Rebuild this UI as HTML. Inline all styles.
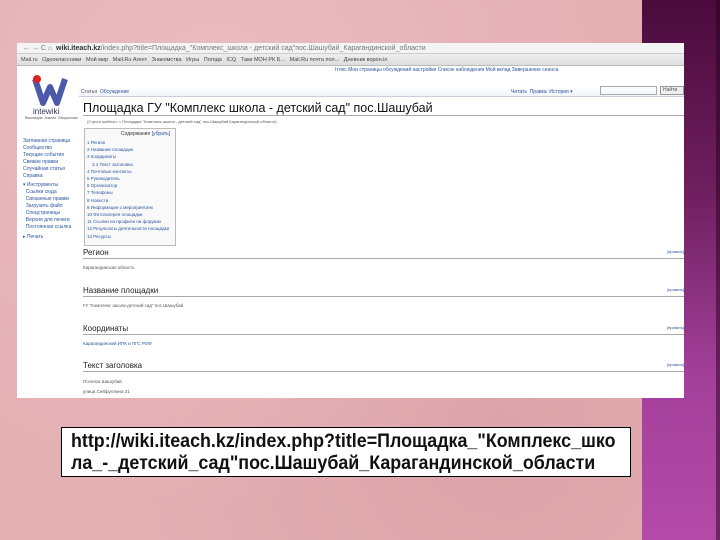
<!DOCTYPE html><html><head><meta charset="utf-8"><style>
*{margin:0;padding:0;box-sizing:border-box}
body{width:720px;height:540px;overflow:hidden;position:relative;background:#e3aeb3;font-family:"Liberation Sans",sans-serif}
.bg{position:absolute;inset:0;background:radial-gradient(circle at 30% 20%,#eabcc0,transparent 60%),radial-gradient(circle at 70% 80%,#dca4aa,transparent 60%),#e3b0b4}
.pur{position:absolute;left:642px;top:0;width:78px;height:540px;background:linear-gradient(#4a0b3c,#6e1f5e 35%,#a3409a 70%,#b44aa8)}
.pur:after{content:"";position:absolute;right:0;top:0;width:4px;height:540px;background:rgba(40,0,30,.5)}
.shot{position:absolute;left:17px;top:43px;width:667px;height:355px;background:#fff;overflow:hidden;font-size:5px;color:#555}
.addr{position:absolute;left:0;top:0;width:667px;height:11px;background:#f4f4f4;border-bottom:1px solid #ccc;font-size:7px;line-height:11px;padding-left:6px;color:#777;white-space:nowrap}
.bm{position:absolute;left:0;top:11px;width:667px;height:12px;background:linear-gradient(#eee,#ddd);border-bottom:1px solid #bbb;font-size:5.5px;line-height:12px;padding-left:4px;color:#444;white-space:nowrap}
.a{position:absolute;white-space:nowrap}
.blue{color:#2a55a0}
.h{position:absolute;left:66px;width:601px;border-bottom:1px solid #aaa;font-size:8px;color:#222;padding-bottom:1px}
.box{position:absolute;left:61px;top:427px;width:570px;height:50px;background:#fff;border:1px solid #000}
.ln{position:absolute;left:9px;font-size:19px;font-weight:bold;color:#111;white-space:nowrap;transform-origin:0 0;transform:scaleX(.94)}
</style></head><body>
<div class="bg"></div><div class="pur"></div>
<div class="shot">
<div class="addr">← → C ⌂ &nbsp;<b style="color:#333">wiki.iteach.kz</b>/index.php?title=Площадка_"Комплекс_школа - детский сад"пос.Шашубай_Карагандинской_области</div>
<div class="bm">Mail.ru &nbsp; Одноклассники &nbsp; Мой мир &nbsp; Mail.Ru Агент &nbsp; Знакомства &nbsp; Игры &nbsp; Погода &nbsp; ICQ &nbsp; Таки МОН РК Б... &nbsp; Mail.Ru почта пол... &nbsp; Дневник ворон.in</div>
<div class="a" style="left:14px;top:30px;width:38px;height:34px">
<svg width="38" height="34"><path d="M4 6 L12 30 L19 14 L26 30 L34 6" fill="none" stroke="#4a5aa8" stroke-width="6" stroke-linejoin="round"/><circle cx="6" cy="6" r="4" fill="#d22"/></svg></div>
<div class="a" style="left:16px;top:64px;font-size:8px;color:#335">intewiki</div>
<div class="a" style="left:8px;top:73px;font-size:3.5px">Википедия. Знание. Лекционная</div>
<div class="a" style="left:318px;top:24px;font-size:5px"><span style="color:#2a55a0">Iтлес Мои страницы обсуждений настройки Список наблюдения Мой вклад Завершение сеанса</span></div>
<div class="a" style="left:62px;top:43px;width:605px;height:11px;border-bottom:1px solid #ccd;background:linear-gradient(#fff,#f2f5fa)"></div>
<div class="a" style="left:64px;top:46px;font-size:5px">Статья &nbsp;<span class="blue">Обсуждение</span></div>
<div class="a" style="left:494px;top:46px;font-size:5px"><span class="blue">Читать &nbsp;Правка &nbsp;История ▾</span></div>
<div class="a" style="left:583px;top:43px;width:57px;height:9px;border:1px solid #aaa"></div>
<div class="a" style="left:643px;top:43px;width:24px;height:9px;border:1px solid #999;background:#eee;font-size:5px;padding-left:2px">Найти</div>
<div class="a" style="left:66px;top:58px;font-size:12.5px;color:#111;width:601px;border-bottom:1px solid #aaa">Площадка ГУ "Комплекс школа - детский сад" пос.Шашубай</div>
<div class="a" style="left:70px;top:76px;font-size:4px">(Строго шаблон: « Площадка "Комплекс школа - детский сад" пос.Шашубай Карагандинской области)</div>
<div class="a blue" style="left:6px;top:95px;font-size:5px;line-height:7px">Заглавная страница<br>Сообщество<br>Текущие события<br>Свежие правки<br>Случайная статья<br>Справка</div>
<div class="a blue" style="left:6px;top:139px;font-size:5px;line-height:7px">▾ Инструменты<br>&nbsp;&nbsp;Ссылки сюда<br>&nbsp;&nbsp;Связанные правки<br>&nbsp;&nbsp;Загрузить файл<br>&nbsp;&nbsp;Спецстраницы<br>&nbsp;&nbsp;Версия для печати<br>&nbsp;&nbsp;Постоянная ссылка</div>
<div class="a blue" style="left:6px;top:191px;font-size:5px">▸ Печать</div>
<div class="a" style="left:67px;top:85px;width:92px;height:118px;border:1px solid #bbb;background:#f9f9f9"></div>
<div class="a" style="left:104px;top:88px;font-size:5px;color:#333">Содержание <span class="blue">[убрать]</span></div>
<div class="a blue" style="left:70px;top:96px;font-size:4.5px;line-height:7.2px">1 Регион<br>2 Название площадки<br>3 Координаты<br>&nbsp;&nbsp;&nbsp;&nbsp;3.1 Текст заголовка<br>4 Почтовые контакты<br>5 Руководитель<br>6 Организатор<br>7 Телефоны<br>8 Новости<br>9 Информация о мероприятиях<br>10 Фотогалерея площадки<br>11 Ссылки на профили на форумах<br>12 Результаты деятельности площадки<br>13 Ресурсы</div>
<div class="h" style="top:205px">Регион</div>
<div class="a" style="left:66px;top:222px;font-size:4.5px">Карагандинская область</div>
<div class="h" style="top:243px">Название площадки</div>
<div class="a" style="left:66px;top:260px;font-size:4.5px">ГУ "Комплекс школа-детский сад" пос.Шашубай</div>
<div class="h" style="top:281px">Координаты</div>
<div class="a blue" style="left:66px;top:298px;font-size:4.5px">Карагандинский ИПК и ПГС РОФ</div>
<div class="h" style="top:318px">Текст заголовка</div>
<div class="a" style="left:66px;top:334px;font-size:4.5px;line-height:10px">Поселок Шашубай<br>улица Сейфуллина 21<br>тел.: 8710 2302035, 87102875181</div>
<div class="a blue" style="left:650px;top:206px;font-size:4px">[править]</div>
<div class="a blue" style="left:650px;top:244px;font-size:4px">[править]</div>
<div class="a blue" style="left:650px;top:282px;font-size:4px">[править]</div>
<div class="a blue" style="left:650px;top:319px;font-size:4px">[править]</div>
</div>
<div class="box">
<div class="ln" style="top:3px">http://wiki.iteach.kz/index.php?title=Площадка_"Комплекс_шко</div>
<div class="ln" style="top:25px">ла_-_детский_сад"пос.Шашубай_Карагандинской_области</div>
</div>
</body></html>
